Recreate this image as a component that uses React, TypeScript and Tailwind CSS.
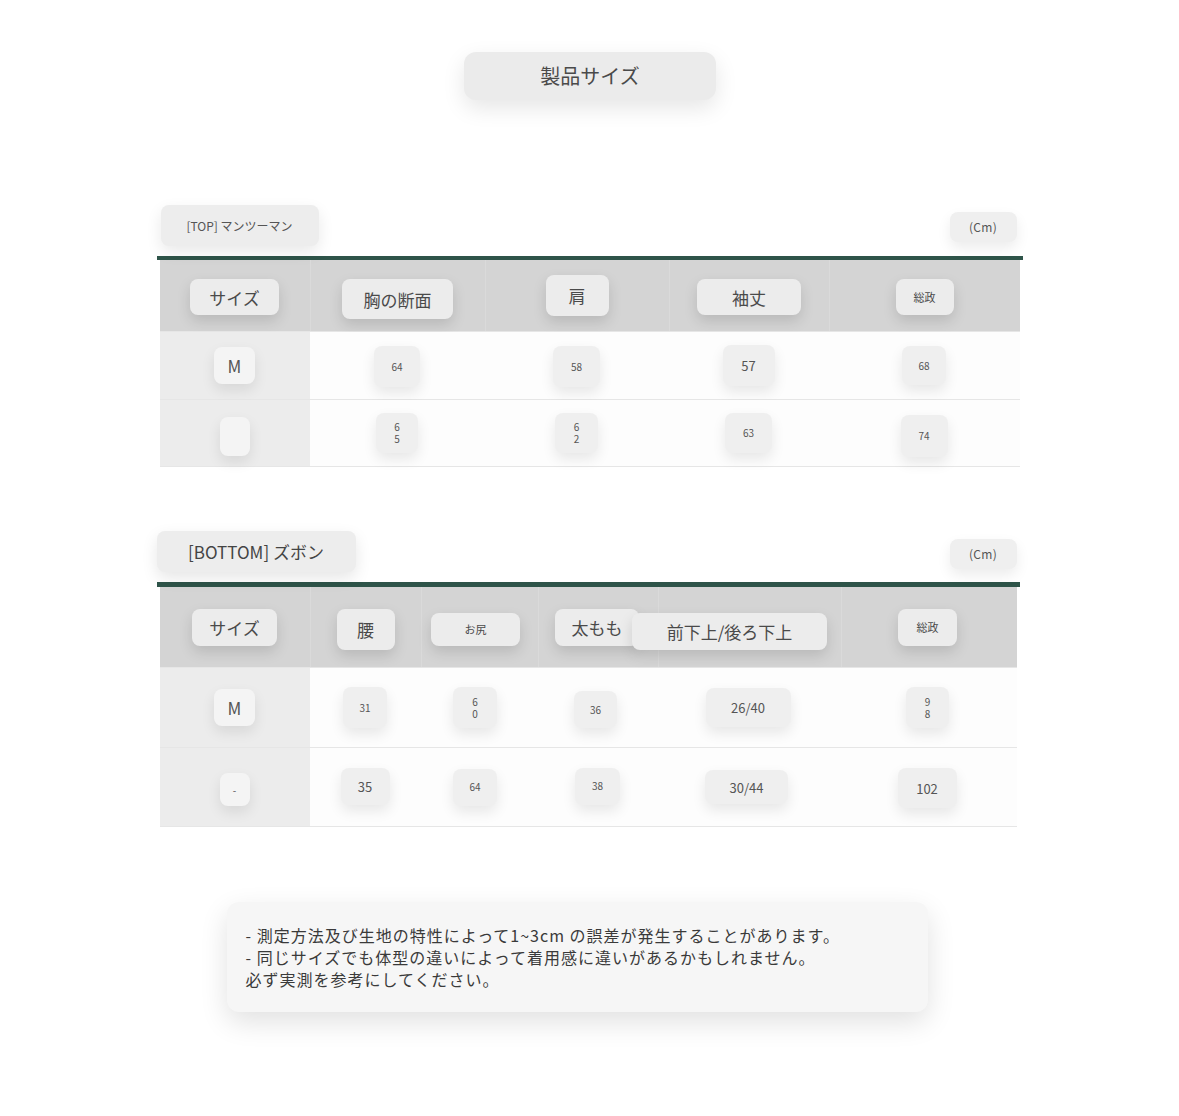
import React from "react";

type Cell = { t: string; c: string };

const chip = "flex items-center justify-center rounded-lg text-[#4a4a4a] leading-none";
const headChip = `${chip} bg-[#ececec] shadow-[0_6px_14px_rgba(0,0,0,0.13)]`;
const valChip = `${chip} bg-[#efefef] shadow-[0_6px_14px_rgba(0,0,0,0.09)] text-[#555]`;

const topCols = "grid grid-cols-[150px_175px_184px_160px_191px]";
const bottomCols = "grid grid-cols-[150px_111px_117px_120px_183px_176px]";

const topHead: Cell[] = [
  { t: "サイズ", c: "w-[89px] h-[36px] text-[17px] mt-[3px]" },
  { t: "胸の断面", c: "w-[111px] h-[40px] text-[17px] mt-[7px]" },
  { t: "肩", c: "w-[63px] h-[41px] text-[17px]" },
  { t: "袖丈", c: "w-[104px] h-[36px] text-[17px] mt-[3px]" },
  { t: "総政", c: "w-[58px] h-[36px] text-[11px] mt-[3px]" },
];

const topRows: Cell[][] = [
  [
    { t: "M", c: "w-[41px] h-[37px] text-[17px] bg-[#f4f4f4]" },
    { t: "64", c: "w-[46px] h-[41px] text-[10px] mt-[2px]" },
    { t: "58", c: "w-[47px] h-[41px] text-[10px] mt-[2px]" },
    { t: "57", c: "w-[52px] h-[41px] text-[13px]" },
    { t: "68", c: "w-[44px] h-[39px] text-[10px]" },
  ],
  [
    { t: "", c: "w-[30px] h-[39px] bg-[#f4f4f4] mt-[7px]" },
    { t: "6\n5", c: "w-[42px] h-[40px] text-[10px]" },
    { t: "6\n2", c: "w-[43px] h-[40px] text-[10px]" },
    { t: "63", c: "w-[47px] h-[40px] text-[10px]" },
    { t: "74", c: "w-[47px] h-[42px] text-[10px] mt-[5px]" },
  ],
];

const bottomHead: Cell[] = [
  { t: "サイズ", c: "w-[85px] h-[37px] text-[17px]" },
  { t: "腰", c: "w-[58px] h-[41px] text-[17px] mt-[4px]" },
  { t: "お尻", c: "w-[89px] h-[33px] text-[11px] mt-[4px] -ml-[8px]" },
  { t: "太もも", c: "w-[84px] h-[37px] text-[17px] -ml-[2px]" },
  { t: "前下上/後ろ下上", c: "w-[195px] h-[37px] text-[17px] mt-[8px] -ml-[40px] relative" },
  { t: "総政", c: "w-[59px] h-[37px] text-[11px] -ml-[3px]" },
];

const bottomRows: Cell[][] = [
  [
    { t: "M", c: "w-[41px] h-[37px] text-[17px] bg-[#f4f4f4]" },
    { t: "31", c: "w-[44px] h-[41px] text-[10px]" },
    { t: "6\n0", c: "w-[44px] h-[41px] text-[10px] -ml-[8px]" },
    { t: "36", c: "w-[43px] h-[37px] text-[10px] mt-[4px] -ml-[4px]" },
    { t: "26/40", c: "w-[85px] h-[39px] text-[13px] -ml-[2px]" },
    { t: "9\n8", c: "w-[43px] h-[41px] text-[10px] -ml-[2px]" },
  ],
  [
    { t: "-", c: "w-[30px] h-[33px] text-[10px] bg-[#f4f4f4] mt-[5px]" },
    { t: "35", c: "w-[49px] h-[37px] text-[13px] -mt-[2px]" },
    { t: "64", c: "w-[44px] h-[37px] text-[10px] -ml-[8px]" },
    { t: "38", c: "w-[45px] h-[37px] text-[10px] -mt-[2px]" },
    { t: "30/44", c: "w-[83px] h-[34px] text-[13px] -ml-[5px]" },
    { t: "102", c: "w-[59px] h-[40px] text-[13px] mt-[2px] -ml-[3px]" },
  ],
];

function Chip({ cell, head }: { cell: Cell; head?: boolean }) {
  const stacked = cell.t.includes("\n");
  return (
    <div className={`${head ? headChip : valChip} ${cell.c}`}>
      <span className={stacked ? "whitespace-pre-line text-center leading-[12px]" : ""}>{cell.t}</span>
    </div>
  );
}

function SizeTable({
  cols,
  head,
  rows,
  headH,
  rowH,
}: {
  cols: string;
  head: Cell[];
  rows: Cell[][];
  headH: string;
  rowH: string;
}) {
  return (
    <div className="px-[3px]">
      <div className={`${cols} ${headH} bg-[#d4d4d4]`}>
        {head.map((h, i) => (
          <div
            key={i}
            className={`flex items-center justify-center ${i > 0 ? "border-l border-[#dadada]" : ""}`}
          >
            <Chip cell={h} head />
          </div>
        ))}
      </div>
      {rows.map((r, ri) => (
        <div key={ri} className={`${cols} ${rowH} border-t border-[#e6e6e6] ${ri === rows.length - 1 ? "border-b" : ""}`}>
          {r.map((c, ci) => (
            <div
              key={ci}
              className={`flex items-center justify-center ${ci === 0 ? "bg-[#ececec]" : "bg-[#fdfdfd]"}`}
            >
              <Chip cell={c} />
            </div>
          ))}
        </div>
      ))}
    </div>
  );
}

export default function App() {
  return (
    <div
      className="min-h-[1116px] bg-white pt-[52px]"
      style={{ fontFamily: '"Noto Sans CJK JP", "Noto Sans", sans-serif' }}
    >
      <div className="flex justify-center pl-[1px]">
        <div className="flex h-[48px] w-[252px] items-center justify-center rounded-xl bg-[#ebebeb] text-[20px] text-[#4a4a4a] shadow-[0_8px_22px_rgba(0,0,0,0.10)]">
          製品サイズ
        </div>
      </div>

      {/* TOP */}
      <div className="mx-auto mt-[105px] w-[866px]">
        <div className="flex items-center justify-between pl-[4px] pr-[6px]">
          <div className="flex h-[41px] w-[158px] items-center justify-center rounded-lg bg-[#ededed] text-[12px] text-[#555] shadow-[0_6px_16px_rgba(0,0,0,0.09)]">
            [TOP] マンツーマン
          </div>
          <div className="mt-[3px] flex h-[30px] w-[67px] items-center justify-center rounded-lg bg-[#efefef] text-[12px] tracking-wide text-[#555] shadow-[0_6px_14px_rgba(0,0,0,0.08)]">
            (Cm)
          </div>
        </div>
        <div className="mt-[10px] h-[4px] bg-[#2e5449]" />
        <SizeTable cols={topCols} head={topHead} rows={topRows} headH="h-[71px]" rowH="h-[68px]" />
      </div>

      {/* BOTTOM */}
      <div className="mx-auto mt-[64px] w-[866px] pr-[3px]">
        <div className="flex items-center justify-between pr-[3px]">
          <div className="flex h-[41px] w-[199px] items-center justify-center rounded-lg bg-[#ededed] text-[17px] text-[#444] shadow-[0_6px_16px_rgba(0,0,0,0.10)]">
            [BOTTOM] ズボン
          </div>
          <div className="mt-[5px] flex h-[30px] w-[67px] items-center justify-center rounded-lg bg-[#efefef] text-[12px] tracking-wide text-[#555] shadow-[0_6px_14px_rgba(0,0,0,0.08)]">
            (Cm)
          </div>
        </div>
        <div className="mt-[10px] h-[5px] bg-[#2e5449]" />
        <SizeTable cols={bottomCols} head={bottomHead} rows={bottomRows} headH="h-[80px]" rowH="h-[80px]" />
      </div>

      {/* NOTES */}
      <div className="mx-auto mt-[75px] w-[866px]">
        <div className="ml-[70px] flex h-[110px] w-[701px] flex-col justify-center rounded-xl bg-[#f6f6f6] px-[19px] text-[16px] leading-[22px] tracking-[1px] text-[#3a3a3a] shadow-[0_10px_28px_rgba(0,0,0,0.12)]">
          <p>- 測定方法及び生地の特性によって1~3cm の誤差が発生することがあります。</p>
          <p>- 同じサイズでも体型の違いによって着用感に違いがあるかもしれません。</p>
          <p>必ず実測を参考にしてください。</p>
        </div>
      </div>
    </div>
  );
}
